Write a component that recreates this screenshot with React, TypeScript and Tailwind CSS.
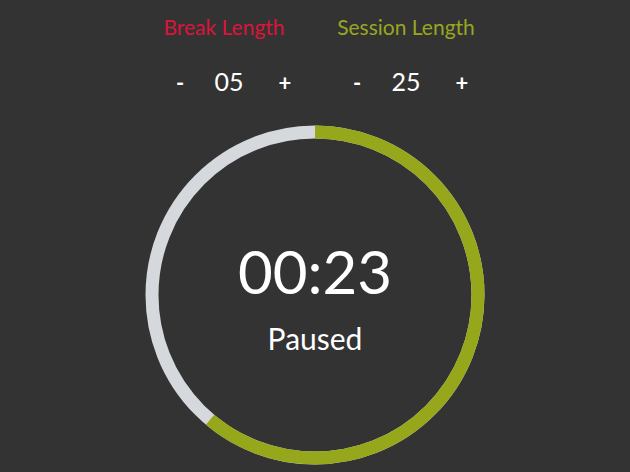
import React from "react";

const R = 163;
const C = 2 * Math.PI * R;
const progress = 220 / 360;

function Control({
  label,
  color,
  value,
  rowPad,
}: {
  label: string;
  color: string;
  value: string;
  rowPad: string;
}) {
  return (
    <div className="flex w-[182px] flex-col items-center">
      <h2 className={`h-[34px] text-[21px] leading-[34px] ${color}`}>{label}</h2>
      <div className={`mt-[23px] flex h-[30px] items-center justify-center text-[22px] font-bold text-white ${rowPad}`}>
        <button className="w-[56px] pl-[14px] text-center">-</button>
        <span className="w-[56px] text-center text-[25px] font-normal">{value}</span>
        <button className="w-[56px] text-center">+</button>
      </div>
    </div>
  );
}

export default function App() {
  return (
    <main
      className="flex min-h-[472px] w-full flex-col items-center bg-[#333333] pt-[10px]"
      style={{ fontFamily: "Lato, 'Open Sans', sans-serif" }}
    >
      <div className="flex justify-center">
        <Control label="Break Length" color="text-[#dc143c]" value="05" rowPad="pl-[10px]" />
        <Control label="Session Length" color="text-[#9aa61f]" value="25" rowPad="" />
      </div>

      <div className="relative mt-[28px] flex h-[340px] w-[340px] flex-col items-center justify-center">
        <svg className="absolute inset-0" width="340" height="340" viewBox="0 0 340 340">
          <circle cx="170" cy="170" r={R} fill="none" stroke="#d5d8dc" strokeWidth="13" />
          <circle
            cx="170"
            cy="170"
            r={R}
            fill="none"
            stroke="#97a71c"
            strokeWidth="13"
            strokeDasharray={`${C * progress} ${C}`}
            transform="rotate(-90 170 170)"
          />
        </svg>
        <div className="relative mt-[4px] text-[60px] leading-none text-white">00:23</div>
        <div className="relative mt-[22px] text-[30px] leading-none text-white">Paused</div>
      </div>
    </main>
  );
}
